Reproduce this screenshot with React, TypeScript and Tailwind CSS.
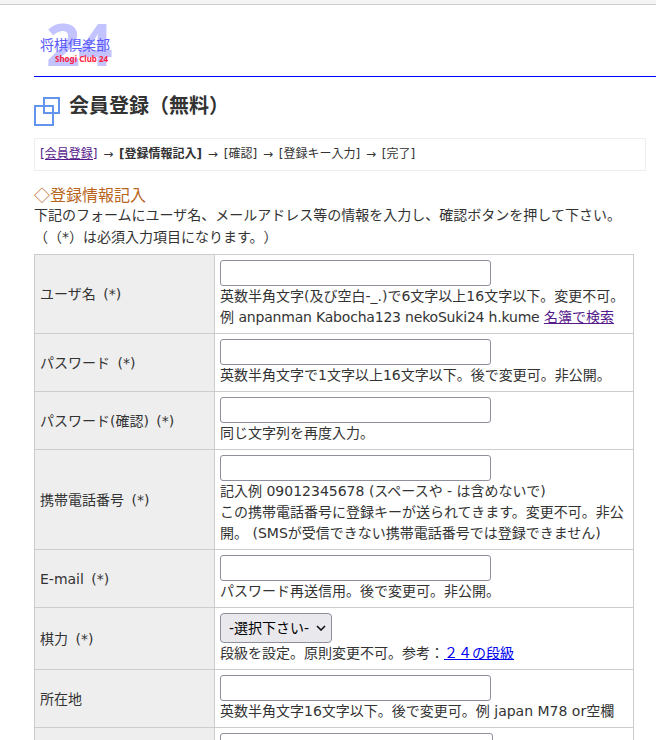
const font = { fontFamily: '"DejaVu Sans", "Noto Sans CJK JP", sans-serif' };

function Input({ w = "w-[271px]" }: { w?: string }) {
  return <input type="text" className={`block h-[26px] ${w} rounded-[3px] border border-[#8f8f9d] bg-white`} />;
}

function Row({ label, children, h }: { label: string; children: React.ReactNode; h: string }) {
  return (
    <tr className={h}>
      <th className="w-[180px] border border-[#cccccc] bg-[#eeeeee] px-[5px] text-left align-middle text-[14px] font-normal [word-spacing:3px]">{label}</th>
      <td className="border border-[#cccccc] bg-white px-[5px] pt-[5px] align-top text-[14px] leading-[21px]">{children}</td>
    </tr>
  );
}

export default function App() {
  return (
    <div style={font} className="h-[740px] w-[656px] overflow-hidden bg-white text-[14px] leading-[20px] text-[#333333] [text-spacing-trim:space-all]">
      <div className="h-[5px] border-b border-[#cccccc] bg-[#f4f4f4]" />
      <div className="pl-[34px]">
        <div className="h-[71px]">
          <div className="relative h-[71px] w-[80px]">
            <span className="absolute left-[12px] top-[8px] font-['Noto_Sans'] text-[60px] font-bold leading-[60px] tracking-[-2px] text-[#c3c3ff]">24</span>
            <span className="absolute left-[6px] top-[30px] whitespace-nowrap text-[14px] leading-[20px] text-[#5a5aff]">将棋倶楽部</span>
            <span className="absolute left-[21px] top-[49px] whitespace-nowrap font-['Noto_Sans'] text-[8px] font-bold leading-[10px] text-[#ff2040]">Shogi Club 24</span>
          </div>
        </div>
        <div className="h-px bg-[#0000ff]" />
        <div className="flex h-[61px] items-start">
          <svg width="27" height="29" viewBox="0 0 27 29" className="mt-[20px] shrink-0">
            <rect x="10" y="1" width="15" height="15" fill="none" stroke="#6495ed" strokeWidth="2" />
            <rect x="1" y="9" width="18" height="19" fill="none" stroke="#6495ed" strokeWidth="2" />
          </svg>
          <h1 className="ml-[8px] mt-[15px] text-[20px] font-bold leading-[28px]">会員登録（無料）</h1>
        </div>
        <div className="h-[33px] w-[612px] border border-[#eeeeee] pl-[5px] pt-[5px] text-[12px] leading-[20px] [word-spacing:2px]">
          <a href="#" className="text-[#551a8b] underline">[会員登録]</a> → <b>[登録情報記入]</b> → [確認] → [登録キー入力] → [完了]
        </div>
        <div className="mt-[14px] text-[16px] leading-[19px] text-[#b8651b]"><span className="font-['Noto_Sans_CJK_JP']">◇</span>登録情報記入</div>
        <p className="leading-[21px]">下記のフォームにユーザ名、メールアドレス等の情報を入力し、確認ボタンを押して下さい。</p>
        <p className="leading-[22px]">（（*）は必須入力項目になります。）</p>
        <table className="mt-[6px] w-[600px] table-fixed border-collapse">
          <tbody>
            <Row label="ユーザ名 (*)" h="h-[79px]">
              <Input />
              <div>英数半角文字(及び空白-_.)で6文字以上16文字以下。変更不可。</div>
              <div>例 <span className="tracking-[-0.2px]">anpanman Kabocha123 nekoSuki24 h.kume</span> <a href="#" className="text-[#551a8b] underline">名簿で検索</a></div>
            </Row>
            <Row label="パスワード (*)" h="h-[58px]">
              <Input />
              <div>英数半角文字で1文字以上16文字以下。後で変更可。非公開。</div>
            </Row>
            <Row label="パスワード(確認) (*)" h="h-[58px]">
              <Input />
              <div>同じ文字列を再度入力。</div>
            </Row>
            <Row label="携帯電話番号 (*)" h="h-[100px]">
              <Input />
              <div>記入例 09012345678 (スペースや - は含めないで)</div>
              <div>この携帯電話番号に登録キーが送られてきます。変更不可。非公開。 (SMSが受信できない携帯電話番号では登録できません)</div>
            </Row>
            <Row label="E-mail (*)" h="h-[58px]">
              <Input />
              <div>パスワード再送信用。後で変更可。非公開。</div>
            </Row>
            <Row label="棋力 (*)" h="h-[62px]">
              <div className="relative h-[30px] w-[112px]">
                <select className="block h-[30px] w-[112px] appearance-none rounded-[4px] border border-[#8f8f9d] bg-[#e9e9ed] pl-[8px] text-[14px] text-black">
                  <option>-選択下さい-</option>
                </select>
                <svg width="10" height="6" viewBox="0 0 10 6" className="pointer-events-none absolute right-[6px] top-[12px]">
                  <path d="M1 1l4 4 4-4" fill="none" stroke="#111111" strokeWidth="1.6" />
                </svg>
              </div>
              <div>段級を設定。原則変更不可。参考：<a href="#" className="text-[#0000ee] underline">２４の段級</a></div>
            </Row>
            <Row label="所在地" h="h-[58px]">
              <Input />
              <div>英数半角文字16文字以下。後で変更可。例 japan M78 or空欄</div>
            </Row>
            <Row label="" h="h-[58px]">
              <Input w="w-[273px]" />
            </Row>
          </tbody>
        </table>
      </div>
    </div>
  );
}
